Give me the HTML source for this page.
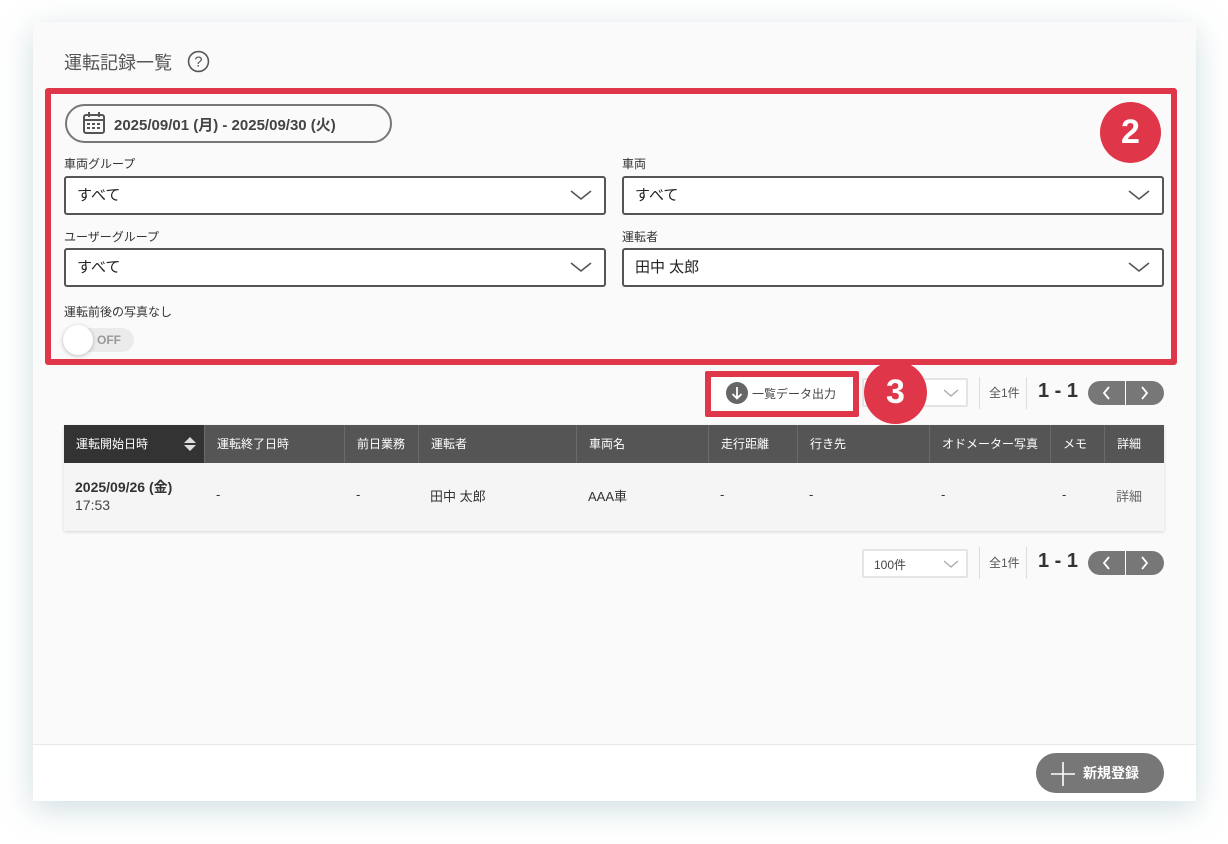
<!DOCTYPE html>
<html><head><meta charset="utf-8"><style>
*{box-sizing:border-box;margin:0;padding:0}
body{width:1228px;height:844px;background:#fff;font-family:"Liberation Sans","Noto Sans CJK JP",sans-serif;position:relative;overflow:hidden;color:#333}
.a{position:absolute}
.panel{left:33px;top:22px;width:1163px;height:779px;background:#fafafa;box-shadow:0 8px 30px rgba(120,160,170,.35)}
.footer{left:33px;top:744px;width:1163px;height:57px;background:#fff;border-top:1px solid #e8e8e8}
.lbl{font-size:12px;color:#333}
.sel{background:#fff;border:2px solid #555;border-radius:3px;height:39px;font-size:15px;padding:6px 11px;color:#222}
.chev{position:absolute;right:12px;top:10px}
.th{position:absolute;top:0;height:38px;line-height:38px;font-size:12px;color:#fff;padding-left:12px;border-left:1px solid #6a6a6a}
.td{position:absolute;font-size:13px;color:#333;top:24px}
.pgb{background:#777;border-radius:12px;height:24px;width:76px}
.badge{border-radius:50%;background:#e0364a;color:#fff;font-weight:bold;text-align:center;font-size:34px}
</style></head><body>
<div class="a panel"></div>
<div class="a footer"></div>
<div class="a" style="left:64px;top:49px;font-size:18px;color:#555">運転記録一覧</div>
<svg class="a" style="left:187px;top:50px" width="23" height="23" viewBox="0 0 22 22"><circle cx="11" cy="11" r="9.5" fill="none" stroke="#555" stroke-width="1.5"/><text x="11" y="16" text-anchor="middle" font-size="14" fill="#555" font-family="Liberation Sans">?</text></svg>

<div class="a" style="left:45px;top:88px;width:1132px;height:277px;border:6px solid #e0364a;border-radius:3px"></div>
<div class="a badge" style="left:1100px;top:102px;width:61px;height:61px;line-height:61px">2</div>

<div class="a" style="left:65px;top:104px;width:327px;height:39px;border:2px solid #777;border-radius:20px"></div>
<svg class="a" style="left:82px;top:111px" width="24" height="24" viewBox="0 0 24 24"><rect x="2" y="4" width="20" height="18" rx="2" fill="none" stroke="#555" stroke-width="2"/><path d="M7 1v5M17 1v5M2 9h20" stroke="#555" stroke-width="2"/><g fill="#555"><rect x="5" y="12" width="3" height="2"/><rect x="10" y="12" width="3" height="2"/><rect x="15" y="12" width="3" height="2"/><rect x="5" y="16" width="3" height="2"/><rect x="10" y="16" width="3" height="2"/><rect x="15" y="16" width="3" height="2"/></g></svg>
<div class="a" style="left:114px;top:114px;font-size:15px;font-weight:bold;color:#444">2025/09/01 (月) - 2025/09/30 (火)</div>

<div class="a lbl" style="left:64px;top:155px">車両グループ</div>
<div class="a sel" style="left:64px;top:176px;width:542px">すべて<svg class="chev" width="22" height="14"><path d="M1 3l10 8 10-8" fill="none" stroke="#555" stroke-width="1.6"/></svg></div>
<div class="a lbl" style="left:622px;top:155px">車両</div>
<div class="a sel" style="left:622px;top:176px;width:542px">すべて<svg class="chev" width="22" height="14"><path d="M1 3l10 8 10-8" fill="none" stroke="#555" stroke-width="1.6"/></svg></div>
<div class="a lbl" style="left:64px;top:228px">ユーザーグループ</div>
<div class="a sel" style="left:64px;top:248px;width:542px">すべて<svg class="chev" width="22" height="14"><path d="M1 3l10 8 10-8" fill="none" stroke="#555" stroke-width="1.6"/></svg></div>
<div class="a lbl" style="left:622px;top:228px">運転者</div>
<div class="a sel" style="left:622px;top:248px;width:542px">田中 太郎<svg class="chev" width="22" height="14"><path d="M1 3l10 8 10-8" fill="none" stroke="#555" stroke-width="1.6"/></svg></div>
<div class="a lbl" style="left:64px;top:303px">運転前後の写真なし</div>
<div class="a" style="left:63px;top:328px;width:71px;height:24px;background:#ebebeb;border-radius:12px"></div>
<div class="a" style="left:97px;top:333px;font-size:12px;font-weight:bold;color:#999">OFF</div>
<div class="a" style="left:63px;top:325px;width:30px;height:30px;border-radius:50%;background:#fff;box-shadow:0 1px 4px rgba(0,0,0,.25)"></div>

<div class="a" style="left:705px;top:371px;width:154px;height:46px;border:6px solid #e0364a;border-radius:2px;background:#fff"></div>
<div class="a" style="left:726px;top:382px;width:22px;height:22px;border-radius:50%;background:#666"></div>
<svg class="a" style="left:726px;top:382px" width="22" height="22"><path d="M11 5v11M6.5 12l4.5 4.5 4.5-4.5" fill="none" stroke="#fff" stroke-width="1.8"/></svg>
<div class="a" style="left:752px;top:385px;font-size:12px;color:#444">一覧データ出力</div>
<div class="a" style="left:862px;top:378px;width:106px;height:29px;border:2px solid #e4e4e4;background:#fff;border-radius:2px"></div>
<svg class="a" style="left:943px;top:388px" width="16" height="10"><path d="M1 2l7 6 7-6" fill="none" stroke="#aaa" stroke-width="1.3"/></svg>
<div class="a badge" style="left:864px;top:361px;width:63px;height:63px;line-height:63px">3</div>
<div class="a" style="left:979px;top:377px;width:1px;height:32px;background:#ddd"></div>
<div class="a" style="left:989px;top:384px;font-size:12px;color:#555">全1件</div>
<div class="a" style="left:1026px;top:377px;width:1px;height:32px;background:#ddd"></div>
<div class="a" style="left:1038px;top:380px;font-size:20px;font-weight:bold;color:#333">1 - 1</div>
<div class="a pgb" style="left:1088px;top:381px"></div>
<div class="a" style="left:1125px;top:381px;width:1px;height:24px;background:#fff"></div>
<svg class="a" style="left:1088px;top:381px" width="76" height="24"><path d="M21 6l-5 6 5 6M54 6l5 6-5 6" fill="none" stroke="#fff" stroke-width="1.8"/></svg>

<div class="a" style="left:64px;top:425px;width:1100px;height:106px;background:#f5f5f5;box-shadow:0 1px 3px rgba(0,0,0,.15)">
<div class="a" style="left:0;top:0;width:1100px;height:38px;background:#555"></div>
<div class="th" style="left:0;width:140px;background:#333;border:none">運転開始日時<svg style="position:absolute;left:120px;top:12px" width="12" height="14"><path d="M0 6l6-6 6 6zM0 8l6 6 6-6z" fill="#ddd"/></svg></div>
<div class="th" style="left:140px">運転終了日時</div>
<div class="th" style="left:280px">前日業務</div>
<div class="th" style="left:354px">運転者</div>
<div class="th" style="left:512px">車両名</div>
<div class="th" style="left:644px">走行距離</div>
<div class="th" style="left:733px">行き先</div>
<div class="th" style="left:865px">オドメーター写真</div>
<div class="th" style="left:986px">メモ</div>
<div class="th" style="left:1040px">詳細</div>
<div class="a" style="left:11px;top:52px;font-size:14px;font-weight:bold;color:#333">2025/09/26 (金)</div>
<div class="a" style="left:11px;top:72px;font-size:14px;color:#444">17:53</div>
<div class="a td" style="left:152px;top:62px">-</div>
<div class="a td" style="left:292px;top:62px">-</div>
<div class="a td" style="left:366px;top:61px">田中 太郎</div>
<div class="a td" style="left:524px;top:61px">AAA車</div>
<div class="a td" style="left:656px;top:62px">-</div>
<div class="a td" style="left:745px;top:62px">-</div>
<div class="a td" style="left:877px;top:62px">-</div>
<div class="a td" style="left:998px;top:62px">-</div>
<div class="a td" style="left:1052px;top:61px;color:#666">詳細</div>
</div>

<div class="a" style="left:862px;top:549px;width:106px;height:29px;border:2px solid #e4e4e4;background:#fff;border-radius:2px;font-size:12px;color:#444;padding:5px 10px">100件</div>
<svg class="a" style="left:943px;top:559px" width="16" height="10"><path d="M1 2l7 6 7-6" fill="none" stroke="#aaa" stroke-width="1.3"/></svg>
<div class="a" style="left:979px;top:547px;width:1px;height:32px;background:#ddd"></div>
<div class="a" style="left:989px;top:554px;font-size:12px;color:#555">全1件</div>
<div class="a" style="left:1026px;top:547px;width:1px;height:32px;background:#ddd"></div>
<div class="a" style="left:1038px;top:550px;font-size:20px;font-weight:bold;color:#333">1 - 1</div>
<div class="a pgb" style="left:1088px;top:551px"></div>
<div class="a" style="left:1125px;top:551px;width:1px;height:24px;background:#fff"></div>
<svg class="a" style="left:1088px;top:551px" width="76" height="24"><path d="M21 6l-5 6 5 6M54 6l5 6-5 6" fill="none" stroke="#fff" stroke-width="1.8"/></svg>

<div class="a" style="left:1036px;top:753px;width:128px;height:40px;background:#777;border-radius:20px"></div>
<svg class="a" style="left:1050px;top:761px" width="26" height="26"><path d="M13 1v24M1 13h24" stroke="#fff" stroke-width="1.6"/></svg>
<div class="a" style="left:1083px;top:763px;font-size:14px;font-weight:bold;color:#fff">新規登録</div>
</body></html>
